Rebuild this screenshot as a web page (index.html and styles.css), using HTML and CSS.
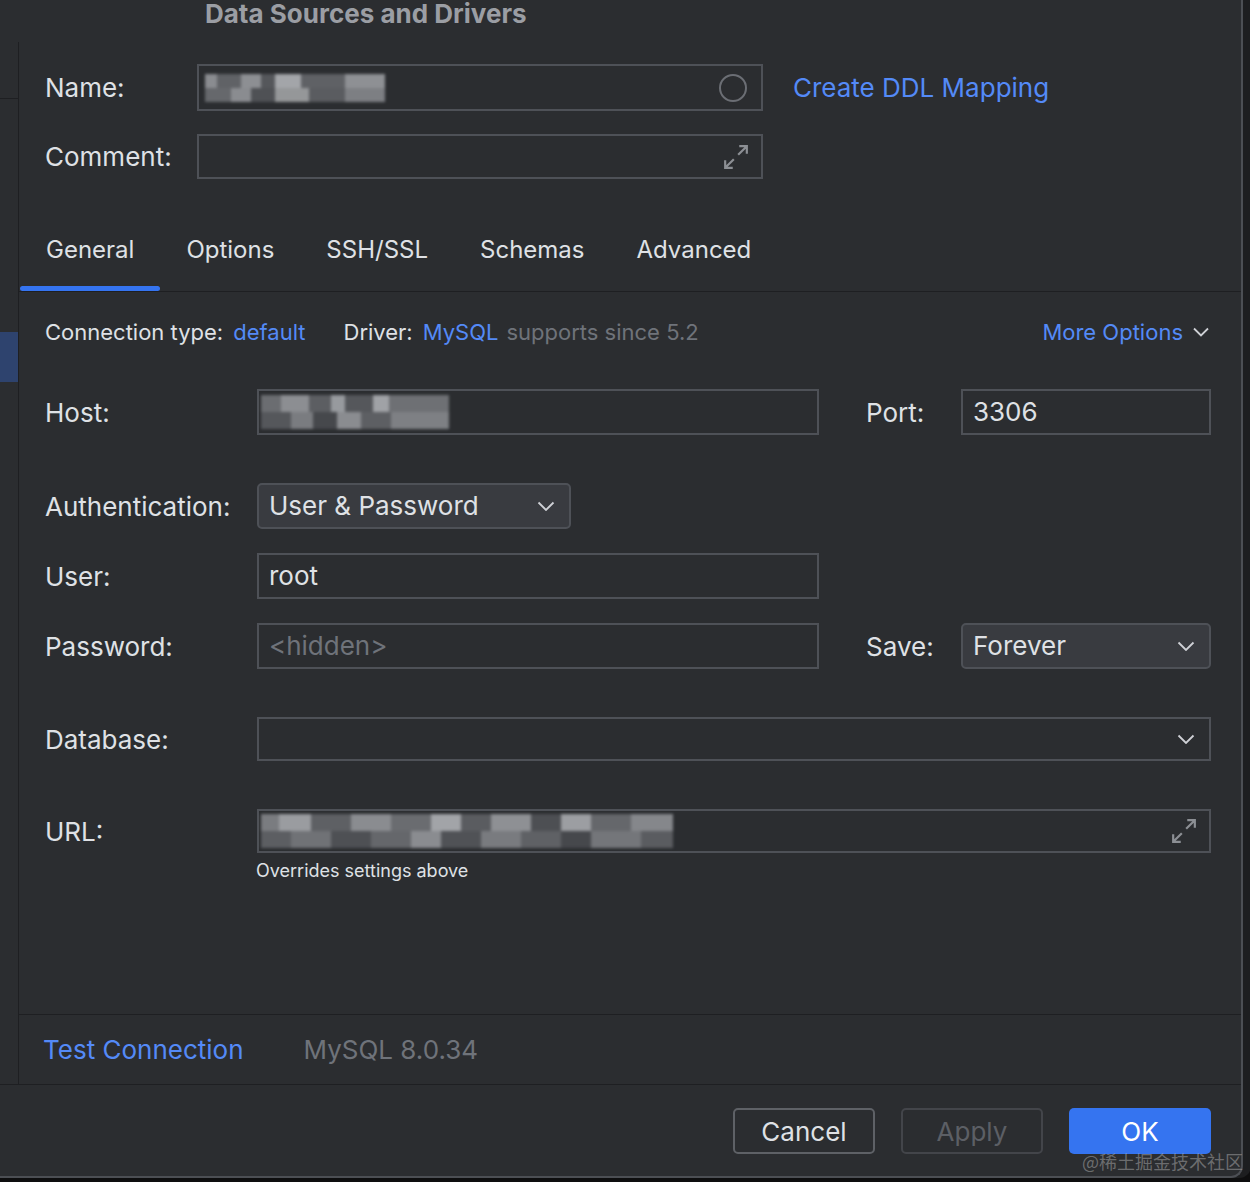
FILE: index.html
```html
<!DOCTYPE html>
<html lang="en">
<head>
    <meta charset="UTF-8">
    <meta name="viewport" content="width=device-width, initial-scale=1.0">
    <title>Data Sources and Drivers</title>
    <link rel="stylesheet" href="styles.css">
</head>
<body>
    <div class="dialog">
        <div class="title">Data Sources and Drivers</div>

        <div class="dialog-body">
            <aside class="side">
                <div class="side-top"></div>
                <div class="side-selected"></div>
            </aside>

            <main class="content">
                <div class="head">
                    <div class="head-row">
                        <label>Name:</label>
                        <div class="field field-name">
                            <div class="blur blur-name"></div>
                            <svg class="icon-circle" width="30" height="30" viewBox="0 0 30 30"><circle cx="15" cy="15" r="13" fill="none" stroke="#6b6e74" stroke-width="2"/></svg>
                        </div>
                        <a class="link ddl">Create DDL Mapping</a>
                    </div>
                    <div class="head-row">
                        <label>Comment:</label>
                        <div class="field field-comment">
                            <svg class="icon-expand" width="26" height="26" viewBox="0 0 24 24"><path d="M15 2h7v7M22 2l-8 8M2 15v7h7M2 22l8-8" fill="none" stroke="#8c8f94" stroke-width="2"/></svg>
                        </div>
                    </div>
                </div>

                <nav class="tabs">
                    <div class="tab active"><span>General</span><i class="indicator"></i></div>
                    <div class="tab"><span>Options</span><i class="indicator"></i></div>
                    <div class="tab"><span>SSH/SSL</span><i class="indicator"></i></div>
                    <div class="tab"><span>Schemas</span><i class="indicator"></i></div>
                    <div class="tab"><span>Advanced</span><i class="indicator"></i></div>
                </nav>

                <section class="general">
                    <div class="conn-row">
                        <span>Connection type:</span>
                        <a class="link">default</a>
                        <span class="driver">Driver:</span>
                        <a class="link">MySQL</a>
                        <span class="muted">supports since 5.2</span>
                        <a class="link more">More Options
                            <svg width="16" height="10" viewBox="0 0 16 10"><path d="M1 1.5l7 7 7-7" fill="none" stroke="#cfd1d6" stroke-width="1.8"/></svg>
                        </a>
                    </div>

                    <div class="form-row row-host">
                        <label>Host:</label>
                        <div class="field"><div class="blur blur-host"></div></div>
                        <label class="side-label">Port:</label>
                        <div class="field">3306</div>
                    </div>

                    <div class="form-row row-auth">
                        <label>Authentication:</label>
                        <div class="select select-auth">
                            <span>User &amp; Password</span>
                            <svg width="18" height="10" viewBox="0 0 18 10"><path d="M1.5 1.5l7.5 7.5 7.5-7.5" fill="none" stroke="#cfd1d6" stroke-width="1.8"/></svg>
                        </div>
                    </div>

                    <div class="form-row row-tight">
                        <label>User:</label>
                        <div class="field">root</div>
                    </div>

                    <div class="form-row row-tight">
                        <label>Password:</label>
                        <div class="field placeholder">&lt;hidden&gt;</div>
                        <label class="side-label">Save:</label>
                        <div class="select">
                            <span>Forever</span>
                            <svg width="18" height="10" viewBox="0 0 18 10"><path d="M1.5 1.5l7.5 7.5 7.5-7.5" fill="none" stroke="#cfd1d6" stroke-width="1.8"/></svg>
                        </div>
                    </div>

                    <div class="form-row row-wide">
                        <label>Database:</label>
                        <div class="field field-wide combo">
                            <svg width="18" height="10" viewBox="0 0 18 10"><path d="M1.5 1.5l7.5 7.5 7.5-7.5" fill="none" stroke="#cfd1d6" stroke-width="1.8"/></svg>
                        </div>
                    </div>

                    <div class="form-row row-wide">
                        <label>URL:</label>
                        <div class="field field-wide url">
                            <div class="blur blur-url"></div>
                            <svg class="icon-expand" width="26" height="26" viewBox="0 0 24 24"><path d="M15 2h7v7M22 2l-8 8M2 15v7h7M2 22l8-8" fill="none" stroke="#8c8f94" stroke-width="2"/></svg>
                        </div>
                        <div class="hint">Overrides settings above</div>
                    </div>
                </section>

                <div class="test-bar">
                    <a class="link test">Test Connection</a>
                    <span class="muted">MySQL 8.0.34</span>
                </div>
            </main>
        </div>

        <footer class="buttons">
            <button class="btn">Cancel</button>
            <button class="btn disabled">Apply</button>
            <button class="btn primary">OK</button>
        </footer>

        <span class="watermark">@稀土掘金技术社区</span>
    </div>
</body>
</html>
```

FILE: styles.css
```css
/* Page */
body {
    margin: 0;
    background: #0e0e0f;
    font-family: Inter, "Noto Sans", sans-serif;
    font-size: 26px;
    color: #dfe1e5;
    overflow: hidden;
}

.dialog {
    position: relative;
    width: 1241px;
    height: 1176px;
    background: #2b2d30;
    border-right: 2px solid #4c4f54;
    border-bottom: 2px solid #4c4f54;
    border-bottom-right-radius: 12px;
    display: flex;
    flex-direction: column;
    box-shadow: 8px 0 0 #1d1e20;
}

.title {
    flex: none;
    height: 42px;
    padding-left: 205px;
    font-size: 26px;
    font-weight: 700;
    line-height: 28px;
    color: #9b9ea4;
    overflow: hidden;
}

/* Body with side list */
.dialog-body {
    flex: 1;
    display: flex;
    border-bottom: 1px solid #1e1f22;
}

.side {
    width: 18px;
    border-right: 1px solid #1e1f22;
}

.side-top {
    height: 56px;
    border-bottom: 1px solid #1e1f22;
}

.side-selected {
    margin-top: 233px;
    height: 50px;
    background: #2e436e;
}

.content {
    flex: 1;
    display: flex;
    flex-direction: column;
}

/* Common bits */
.link {
    color: #548af7;
    text-decoration: none;
}

.muted {
    color: #6f737a;
}

.field,
.select {
    box-sizing: border-box;
    height: 46px;
    border: 2px solid #4e5157;
    display: flex;
    align-items: center;
    padding: 0 10px;
    line-height: 30px;
}

.select {
    justify-content: space-between;
    background: #393b40;
    border-radius: 5px;
    padding-right: 14px;
}

.placeholder {
    color: #6f737a;
}

.blur {
    filter: blur(1.8px);
}

/* Name / comment */
.head {
    padding: 22px 0 0 26px;
    display: flex;
    flex-direction: column;
    gap: 23px;
}

.head-row {
    display: flex;
    align-items: center;
}

.head-row label {
    width: 152px;
}

.field-name {
    width: 566px;
    height: 47px;
    justify-content: space-between;
    padding: 0 13px 0 6px;
}

.field-comment {
    width: 566px;
    height: 45px;
    justify-content: flex-end;
    padding-right: 12px;
}

.ddl {
    margin-left: 30px;
}

.blur-name {
    width: 180px;
    height: 28px;
    background:
        linear-gradient(90deg, #8a8c90 0 12px, #606266 12px 36px, #8d8f93 36px 56px, #55575b 56px 70px, #a3a5a9 70px 96px, #5f6165 96px 140px, #8e9094 140px 180px) top / 100% 50% no-repeat,
        linear-gradient(90deg, #66686c 0 26px, #8a8c90 26px 46px, #4f5155 46px 70px, #959799 70px 104px, #5a5c60 104px 140px, #7d7f83 140px 180px) bottom / 100% 50% no-repeat;
}

.blur-host {
    width: 188px;
    height: 34px;
    margin-left: -8px;
    background:
        linear-gradient(90deg, #6b6d71 0 20px, #8c8e92 20px 48px, #5c5e62 48px 70px, #979a9e 70px 84px, #55575b 84px 112px, #a0a2a6 112px 128px, #6e7074 128px 188px) top / 100% 50% no-repeat,
        linear-gradient(90deg, #55575b 0 30px, #7a7c80 30px 52px, #46484c 52px 76px, #8a8c90 76px 100px, #5d5f63 100px 130px, #7e8084 130px 188px) bottom / 100% 50% no-repeat;
}

.blur-url {
    width: 412px;
    height: 34px;
    margin-left: -8px;
    background:
        linear-gradient(90deg, #7a7c80 0 18px, #9a9ca0 18px 50px, #5e6064 50px 90px, #8a8c90 90px 130px, #6a6c70 130px 170px, #a2a4a8 170px 200px, #5a5c60 200px 230px, #8e9094 230px 270px, #4d4f53 270px 300px, #9c9ea2 300px 330px, #65676b 330px 370px, #85878b 370px 412px) top / 100% 50% no-repeat,
        linear-gradient(90deg, #5c5e62 0 30px, #707276 30px 70px, #4e5054 70px 110px, #65676b 110px 150px, #8a8c90 150px 180px, #505256 180px 220px, #797b7f 220px 260px, #5f6165 260px 300px, #46484c 300px 330px, #74767a 330px 380px, #5a5c60 380px 412px) bottom / 100% 50% no-repeat;
}

/* Tabs */
.tabs {
    margin-top: 32px;
    padding-left: 1px;
    display: flex;
    border-bottom: 1px solid #1e1f22;
    font-size: 24px;
}

.tab {
    box-sizing: border-box;
    height: 80px;
    padding: 24px 26px 0;
    display: flex;
    flex-direction: column;
    justify-content: space-between;
    line-height: 30px;
}

.indicator {
    height: 5px;
    margin: 0 -26px;
    border-radius: 3px;
}

.tab.active .indicator {
    background: #3574f0;
}

/* General tab */
.general {
    flex: 1;
    padding: 26px 30px 0 26px;
}

.conn-row {
    display: flex;
    align-items: center;
    line-height: 28px;
    font-size: 22px;
}

.conn-row .link,
.conn-row .muted {
    margin-left: 10px;
}

.conn-row .muted {
    margin-left: 8px;
}

.conn-row .driver {
    margin-left: 38px;
}

.conn-row .more {
    margin-left: auto;
    margin-right: 2px;
    display: flex;
    align-items: center;
    gap: 10px;
}

.form-row {
    display: grid;
    grid-template-columns: 212px 562px 142px 250px;
    align-items: center;
    margin-top: 24px;
}

.row-host {
    margin-top: 43px;
}

.row-auth {
    margin-top: 48px;
}

.row-auth .select-auth {
    width: 314px;
}

.row-wide {
    margin-top: 48px;
}

.side-label {
    padding-left: 47px;
}

.field-wide {
    grid-column: 2 / 5;
    height: 44px;
}

.combo {
    justify-content: flex-end;
    padding-right: 14px;
}

.url {
    justify-content: space-between;
    padding-right: 12px;
}

.hint {
    grid-column: 2 / 5;
    margin-top: 7px;
    margin-left: -1px;
    font-size: 18px;
    line-height: 22px;
}

/* Bottom bars */
.test-bar {
    height: 69px;
    border-top: 1px solid #1e1f22;
    padding-left: 24px;
    display: flex;
    align-items: center;
    gap: 60px;
}

.buttons {
    flex: none;
    height: 68px;
    display: flex;
    justify-content: flex-end;
    align-items: flex-start;
    gap: 26px;
    padding: 23px 30px 0 0;
}

.btn {
    width: 142px;
    height: 46px;
    border-radius: 5px;
    border: 2px solid #5e6166;
    background: transparent;
    color: #dfe1e5;
    font-family: inherit;
    font-size: 26px;
}

.btn.disabled {
    border-color: #43454a;
    color: #5c5f65;
}

.btn.primary {
    border: none;
    background: #3574f0;
    color: #fff;
}

.watermark {
    position: absolute;
    right: -2px;
    bottom: 2px;
    font-family: "Noto Sans CJK SC", sans-serif;
    font-size: 18px;
    color: rgba(190, 190, 190, 0.45);
}
```
